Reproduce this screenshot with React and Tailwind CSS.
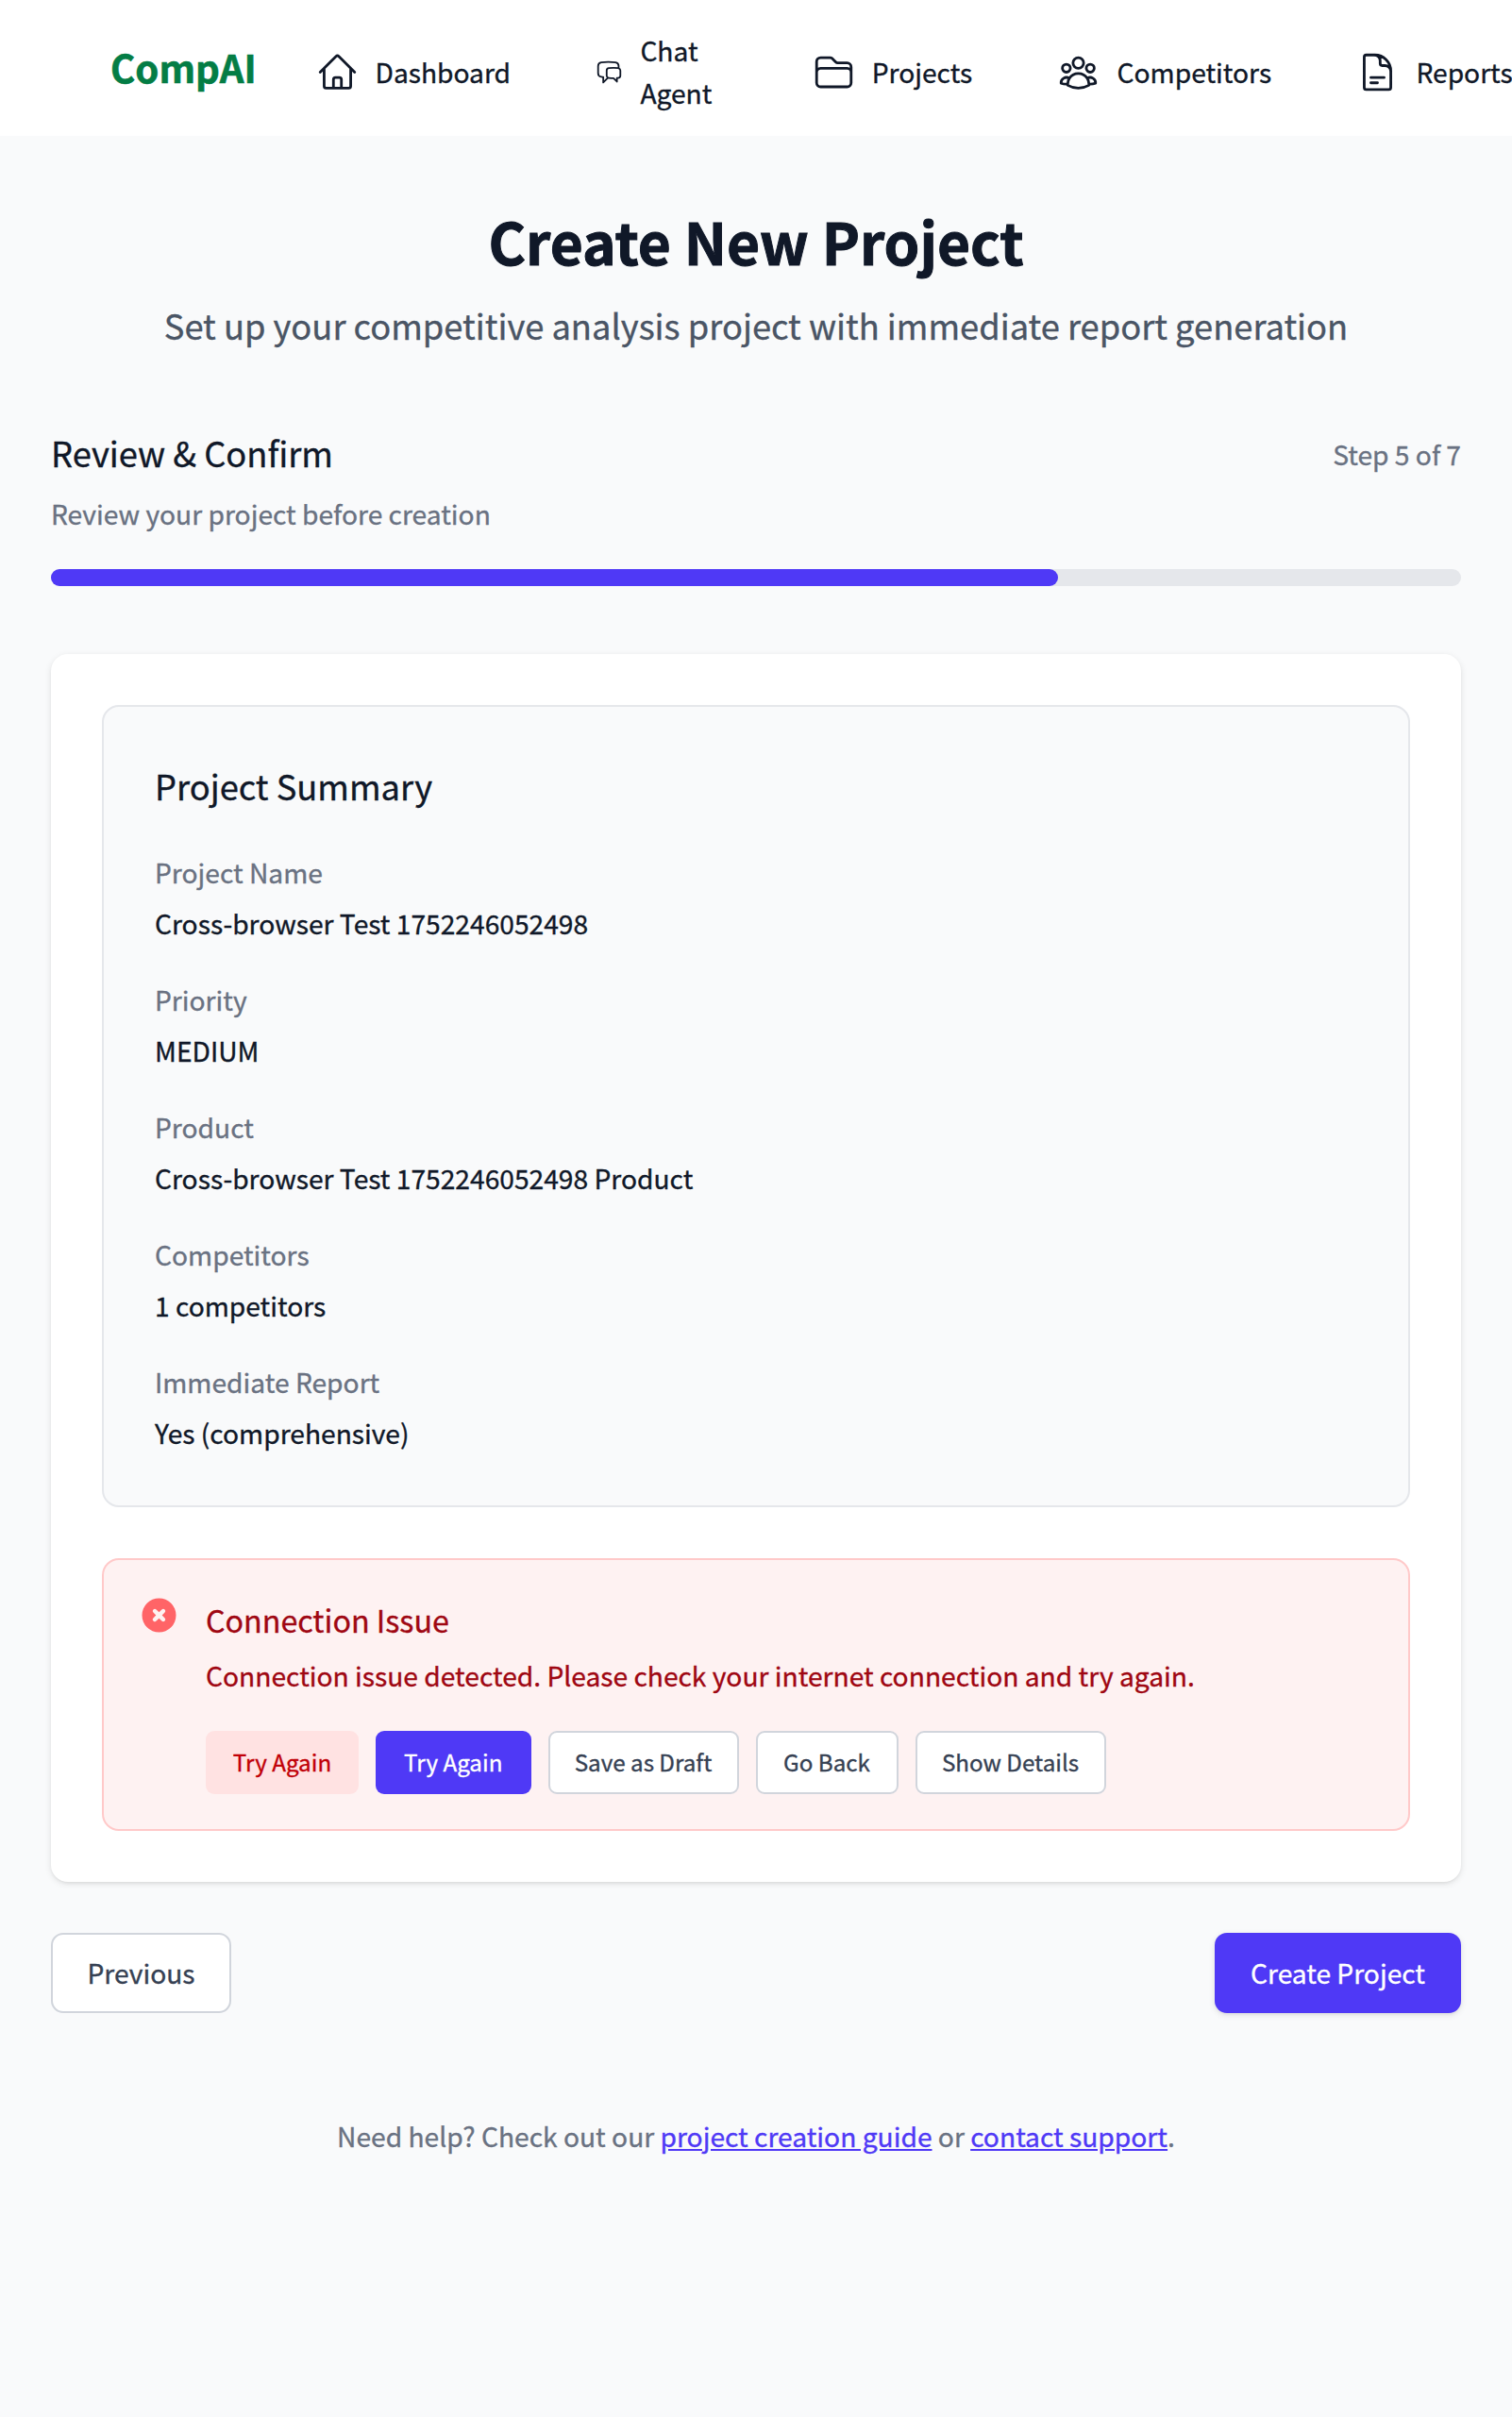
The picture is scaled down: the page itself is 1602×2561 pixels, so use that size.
import {
  HiOutlineHome,
  HiOutlineChatBubbleLeftRight,
  HiOutlineFolder,
  HiOutlineUserGroup,
  HiOutlineDocumentText,
} from "react-icons/hi2";

const navItems = [
  { label: "Dashboard", Icon: HiOutlineHome },
  { label: "Chat Agent", Icon: HiOutlineChatBubbleLeftRight, narrow: true },
  { label: "Projects", Icon: HiOutlineFolder },
  { label: "Competitors", Icon: HiOutlineUserGroup },
  { label: "Reports", Icon: HiOutlineDocumentText },
];

const summary = [
  ["Project Name", "Cross-browser Test 1752246052498"],
  ["Priority", "MEDIUM"],
  ["Product", "Cross-browser Test 1752246052498 Product"],
  ["Competitors", "1 competitors"],
  ["Immediate Report", "Yes (comprehensive)"],
];

const actions = [
  ["Try Again", "w-[162px] bg-[#ffe2e2] text-[#c10007]"],
  ["Try Again", "w-[164.5px] bg-[#4f39f6] text-white"],
  ["Save as Draft", "w-[202px] border-2 border-[#d1d5dc] bg-white text-[#364153]"],
  ["Go Back", "w-[151px] border-2 border-[#d1d5dc] bg-white text-[#364153]"],
  ["Show Details", "w-[202px] border-2 border-[#d1d5dc] bg-white text-[#364153]"],
];

function Nav() {
  return (
    <nav className="flex h-[144px] items-center overflow-hidden bg-white pt-[9px] pl-[117px]">
      <div className="w-[217.5px] shrink-0 pb-3 text-[40.1px] leading-[60px] font-bold text-[#047d45] [-webkit-text-stroke:0.6px]">
        CompAI
      </div>
      <div className="flex shrink-0 items-center gap-[90.3px]">
        {navItems.map(({ label, Icon, narrow }) => (
          <div key={label} className="flex shrink-0 items-center gap-[18px]">
            <Icon className={narrow ? "h-[45px] w-[29px]" : "size-[45px]"} />
            <span className={narrow ? "w-[92px] pb-[3px] leading-[45px]" : "pb-0.5 leading-[45px]"}>{label}</span>
          </div>
        ))}
      </div>
    </nav>
  );
}

function ErrorPanel() {
  return (
    <div className="mt-[54px] flex gap-[27px] rounded-[18px] border-2 border-[#ffc9c9] bg-[#fef2f2] p-9 pb-[37px]">
      <svg viewBox="0 0 20 20" className="size-[45px] shrink-0" fill="#ff6467">
        <path
          fillRule="evenodd"
          clipRule="evenodd"
          d="M10 18a8 8 0 100-16 8 8 0 000 16zM8.707 7.293a1 1 0 00-1.414 1.414L8.586 10l-1.293 1.293a1 1 0 101.414 1.414L10 11.414l1.293 1.293a1 1 0 001.414-1.414L11.414 10l1.293-1.293a1 1 0 00-1.414-1.414L10 8.586 8.707 7.293z"
        />
      </svg>
      <div>
        <h3 className="mt-[0.5px] text-[32.24px] leading-[52px] text-[#9f0712]">Connection Issue</h3>
        <p className="mt-2.5 leading-[45px] text-[#9f0712]">
          Connection issue detected. Please check your internet connection and try again.
        </p>
        <div className="mt-[37.5px] flex gap-[18px]">
          {actions.map(([label, look], i) => (
            <button
              key={i}
              className={`flex h-[67px] items-center justify-center rounded-[9px] pb-px text-[24.2px] leading-9 ${look}`}
            >
              {label}
            </button>
          ))}
        </div>
      </div>
    </div>
  );
}

export default function App() {
  return (
    <div className="min-h-[2561px] w-full overflow-hidden bg-[#f9fafb] font-['Noto_Sans_CJK_JP',sans-serif] text-[28.2px] text-[#101828] [-webkit-text-stroke:0.35px]">
      <Nav />
      <main className="px-[54px] pt-[71px]">
        <h1 className="text-center text-[60.45px] leading-[80px] font-bold [-webkit-text-stroke:1px]">
          Create New Project
        </h1>
        <p className="mt-[19px] text-center text-[36.3px] leading-[60px] text-[#4a5565]">
          Set up your competitive analysis project with immediate report generation
        </p>

        <div className="mt-[75px] flex items-start justify-between">
          <h2 className="text-[36.3px] leading-[60px]">Review &amp; Confirm</h2>
          <span className="mt-[9px] leading-[45px] text-[#6a7282]">Step 5 of 7</span>
        </div>
        <p className="mt-3 leading-[45px] text-[#6a7282]">Review your project before creation</p>
        <div className="mt-[37px] h-[18px] rounded-full bg-[#e5e7eb]">
          <div className="h-full w-[71.43%] rounded-full bg-[#4f39f6]" />
        </div>

        <section className="mt-[72px] rounded-[18px] bg-white p-[54px] shadow-[0_2px_7px_rgba(0,0,0,0.1),0_2px_4px_-2px_rgba(0,0,0,0.1)]">
          <div className="h-[850px] rounded-[18px] border-2 border-[#e5e7eb] bg-[#f9fafb] px-[54px] pt-[53px]">
            <h3 className="text-[36.3px] leading-[60px]">Project Summary</h3>
            <dl className="mt-[39px] flex flex-col gap-9">
              {summary.map(([label, value]) => (
                <div key={label} className="flex flex-col gap-[9px] leading-[45px]">
                  <dt className="text-[#6a7282]">{label}</dt>
                  <dd>{value}</dd>
                </div>
              ))}
            </dl>
          </div>
          <ErrorPanel />
        </section>

        <div className="mt-[54px] flex justify-between">
          <button className="h-[85px] w-[191px] rounded-[13px] border-2 border-[#d1d5dc] bg-white text-[#364153]">
            Previous
          </button>
          <button className="h-[85px] w-[261px] rounded-[13px] bg-[#4f39f6] text-white shadow-[0_2px_7px_rgba(0,0,0,0.1),0_2px_4px_-2px_rgba(0,0,0,0.1)]">
            Create Project
          </button>
        </div>

        <p className="mt-[107px] text-center leading-[45px] text-[#6a7282]">
          Need help? Check out our <a className="text-[#4f39f6] underline">project creation guide</a> or{" "}
          <a className="text-[#4f39f6] underline">contact support</a>.
        </p>
      </main>
    </div>
  );
}
